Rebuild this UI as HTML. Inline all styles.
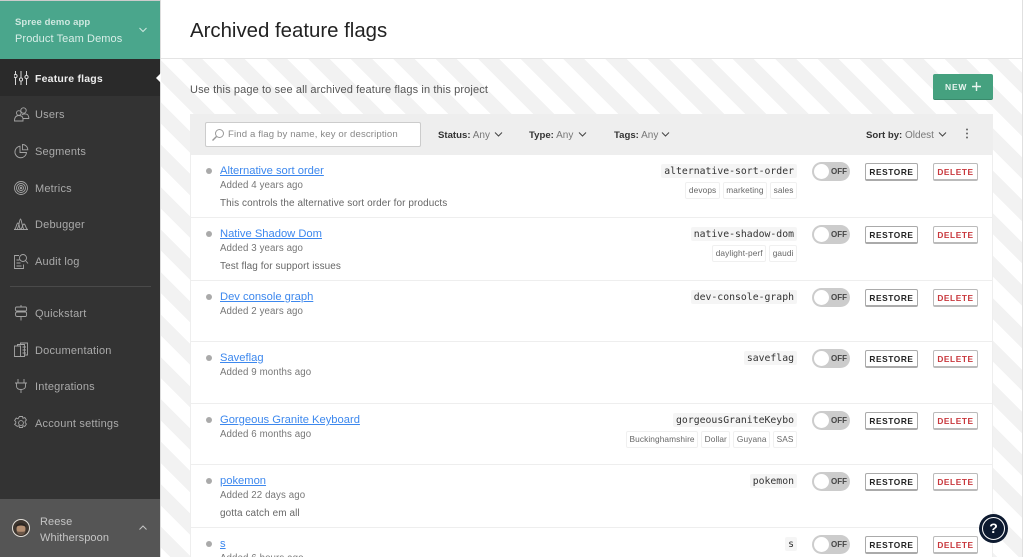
<!DOCTYPE html>
<html><head><meta charset="utf-8"><style>
html,body{margin:0;padding:0;width:1024px;height:557px;overflow:hidden;background:#fff}
body{font-family:"Liberation Sans",sans-serif;position:relative;color:#333}
.a{position:absolute;white-space:nowrap}
#side{left:0;top:0;width:160px;height:557px;background:#333}
#top{left:0;top:0;width:160px;height:59px;background:#4aa68c;border-top:1px solid #ccc;box-sizing:border-box}
#sel{left:0;top:59px;width:160px;height:37px;background:#2a2a2a}
#user{left:0;top:499px;width:160px;height:58px;background:#555}
.nav{left:35px;font-size:11px;color:#aaa;letter-spacing:.2px}
.ic{position:absolute;left:14px;width:16px;height:16px;fill:none;stroke:#a5a5a5;stroke-width:.9}
#main{left:161px;top:59px;width:861px;height:498px;background:repeating-linear-gradient(45deg,#fff 0,#fff 6.4px,#f2f2f2 6.4px,#f2f2f2 21.4px,#fff 21.4px,#fff 30px)}
#panel{left:190px;top:114px;width:803px;height:443px;background:#fff;box-sizing:border-box;border-left:1px solid #eee;border-right:1px solid #eee}
#fh{left:190px;top:114px;width:803px;height:41px;background:#eee}
.ln{left:190px;width:803px;height:1px;background:#eee}
.dot{left:206px;width:6px;height:6px;border-radius:50%;background:#aaa}
.nm{left:220px;font-size:11.2px;color:#3d88ee;text-decoration:underline}
.ad{left:220px;font-size:9.7px;color:#777;letter-spacing:.1px}
.ds{left:220px;font-size:9.95px;color:#666;letter-spacing:.1px}
.key{right:227px;font:9.8px "DejaVu Sans Mono",monospace;color:#333;background:#f5f5f5;padding:2px 3px 0;line-height:12px;border-radius:2px}
.tags{right:227px;display:flex;gap:3px}
.tags span{font-size:8.3px;color:#666;border:1px solid #f0f0f0;border-radius:2px;padding:0 2.5px;height:15px;line-height:15px;letter-spacing:.1px}
.tog{left:812px;width:38px;height:19px;border-radius:10px;background:#ccc}
.tog i{position:absolute;left:2px;top:2px;width:15px;height:15px;border-radius:50%;background:#fff}
.tog b{position:absolute;left:19px;top:5px;font-size:8px;line-height:10px;color:#444}
.btn{box-sizing:border-box;height:18px;text-align:center;background:#fff;border:1px solid #aaa;border-bottom-width:2px;border-radius:2px;font-weight:bold;font-size:8.3px;line-height:17px;letter-spacing:.6px}
.rs{left:865px;width:53px;color:#222}
.dl{left:933px;width:45px;color:#c8373c;border-color:#bbb}
.fl{top:130px;font-size:10px;color:#333}
.fl b{font-weight:bold;font-size:9.6px}.fl span{color:#777}
svg.ch{position:absolute;fill:none;stroke:#444;stroke-width:1}
</style></head><body>
<div class="a" id="side"></div><div class="a" id="top"></div><div class="a" id="sel"></div><div class="a" id="user"></div>
<div class="a" style="left:160px;top:0;width:1px;height:557px;background:#ddd"></div>
<div class="a" style="left:15px;top:17px;font-size:9.5px;font-weight:bold;color:#cfe8e0;letter-spacing:.1px">Spree demo app</div>
<div class="a" style="left:15px;top:33px;font-size:11px;color:#d8eee8;letter-spacing:.1px">Product Team Demos</div>
<svg class="a ch" style="left:138px;top:26px;stroke:#cfe8e0" width="10" height="8"><path d="M1.5 2l3.5 3.500L8.500 2"/></svg>
<div class="a" style="left:156px;top:73px;border:5px solid transparent;border-right-color:#fff;border-left:0"></div>

<svg class="ic" style="top:70px;stroke:#e8e8e8" viewBox="0 0 16 16"><path d="M1.500 1v14M7 1v14M12.500 1v14"/><circle cx="1.500" cy="6" r="1.600" fill="#2a2a2a"/><circle cx="7" cy="9.500" r="1.600" fill="#2a2a2a"/><circle cx="12.500" cy="7" r="1.600" fill="#2a2a2a"/></svg>
<div class="a nav" style="top:73px;color:#eee;font-weight:bold;font-size:10.5px">Feature flags</div>

<svg class="ic" style="top:107px" viewBox="0 0 16 16"><circle cx="9.500" cy="3.500" r="2.700"/><circle cx="4.800" cy="6" r="2.300"/><path d="M.5 14c0-4 1.500-5.500 4.300-5.500s4.200 1.500 4.200 3.500v2zM8 8c1-1.500 5-1.500 6 .2s.8 3.300.8 3.300H9"/></svg>
<div class="a nav" style="top:109px">Users</div>

<svg class="ic" style="top:143px" viewBox="0 0 16 16"><path d="M6 3.200A5.800 5.800 0 1 0 12.500 9.500H6zM8.500 1.500a5.300 5.300 0 0 1 5.300 5.300H8.500z"/></svg>
<div class="a nav" style="top:146px">Segments</div>

<svg class="ic" style="top:180px" viewBox="0 0 16 16"><circle cx="7" cy="8" r="6.500"/><circle cx="7" cy="8" r="4.500"/><circle cx="7" cy="8" r="2.500"/><circle cx="7" cy="8" r=".8"/></svg>
<div class="a nav" style="top:183px">Metrics</div>

<svg class="ic" style="top:216px" viewBox="0 0 16 16"><path d="M0 13.500h14M.5 13.500C2.500 12 2.500 7 4 7s1 5 2.500 6.500M3 13.500C5 11 5.500 3 6.500 3S8 11 10 13.500M6.500 13.500C8.500 12 8.500 8 10 8s1.500 4 3.500 5.500"/></svg>
<div class="a nav" style="top:219px">Debugger</div>

<svg class="ic" style="top:253px" viewBox="0 0 16 16"><path d="M5 2.500H.5v13h9v-4M2.500 7h3M2.500 10h4M2.500 13h5"/><circle cx="9" cy="5" r="3.500"/><path d="M11.500 7.500l2.500 3"/></svg>
<div class="a nav" style="top:256px">Audit log</div>

<div class="a" style="left:10px;top:286px;width:141px;height:1px;background:#4a4a4a"></div>

<svg class="ic" style="top:305px" viewBox="0 0 16 16"><path d="M7 0v2M7 11.500v4M2.500 2h9c1.500 0 1.500 4 0 4h-9c-1.500 0-1.500-4 0-4zM3 7h8.500c1.500 0 1.500 4.500 0 4.500H3c-2 0-2-4.500 0-4.500z"/></svg>
<div class="a nav" style="top:308px">Quickstart</div>

<svg class="ic" style="top:342px" viewBox="0 0 16 16"><path d="M.5 4v10.500h6V4zM3.500 4V2.500h7v12h-4M6.500 2.500V1h7v12h-3M8.500 5H12M8.500 8H12M8.500 11H12"/></svg>
<div class="a nav" style="top:345px">Documentation</div>

<svg class="ic" style="top:378px" viewBox="0 0 16 16"><path d="M4 1v4M10 1v4M1 5h12M2.500 5v3c0 2.500 2 3.500 4.500 3.500s4.500-1 4.500-3.500V5M7 11.500V15"/></svg>
<div class="a nav" style="top:381px">Integrations</div>

<svg class="ic" style="top:415px" viewBox="0 0 16 16"><circle cx="7" cy="8" r="2.400"/><path d="M5.500 1.500h3l.5 1.800 1.800-.7 1.600 2.400-1.200 1.300v1.400l1.200 1.300-1.600 2.400-1.800-.7-.5 1.800h-3l-.5-1.800-1.800.7L.6 9.400l1.200-1.300V6.800L.6 5.500l1.600-2.400 1.800.7z"/></svg>
<div class="a nav" style="top:418px">Account settings</div>

<svg class="a" style="left:12px;top:519px" width="18" height="18" viewBox="0 0 18 18"><circle cx="9" cy="9" r="9" fill="#e4e0da"/><circle cx="9" cy="9" r="8" fill="#3d352e"/><ellipse cx="9" cy="10" rx="4.500" ry="5.500" fill="#b48f72"/><path d="M4.500 12c1.500 1 7.500 1 9 0-.5 3-2.500 4-4.500 4s-4-1-4.500-4z" fill="#6a5546"/><path d="M3.800 8C4 3 14 3 14.200 8 11 6 7 6 3.800 8z" fill="#2c2622"/></svg>
<div class="a" style="left:40px;top:516px;font-size:11px;color:#c5c5c5;letter-spacing:.1px">Reese</div>
<div class="a" style="left:40px;top:532px;font-size:11px;color:#c5c5c5;letter-spacing:.1px">Whitherspoon</div>
<svg class="a ch" style="left:138px;top:524px;stroke:#c5c5c5" width="10" height="8"><path d="M1.500 5.500L5 2l3.500 3.500"/></svg>

<div class="a" style="left:161px;top:58px;width:861px;height:1px;background:#e4e4e4"></div>
<div class="a" style="left:1022px;top:0;width:1px;height:557px;background:#e0e0e0"></div>
<div class="a" id="main"></div>
<div class="a" style="left:190px;top:20px;font-size:20.4px;color:#222">Archived feature flags</div>
<div class="a" style="left:190px;top:84px;font-size:11px;color:#555;letter-spacing:.12px">Use this page to see all archived feature flags in this project</div>
<div class="a" style="left:933px;top:74px;width:60px;height:25px;background:#45a17f;border-radius:2px;border-bottom:1px solid #3a8a6c"></div>
<div class="a" style="left:945px;top:82px;font-size:8.5px;font-weight:bold;color:#e8f5f0;letter-spacing:.8px;line-height:10px">NEW</div>
<svg class="a" style="left:971px;top:81px" width="11" height="11"><path d="M5.500 1v9M1 5.500h9" stroke="#e8f5f0" stroke-width="1.400"/></svg>
<div class="a" id="panel"></div><div class="a" id="fh"></div>
<div class="a" style="left:205px;top:122px;width:216px;height:25px;box-sizing:border-box;background:#fff;border:1px solid #ccc;border-radius:2px"></div>
<svg class="a" style="left:211px;top:128px;fill:none;stroke:#999" width="14" height="14"><circle cx="8.500" cy="5.500" r="4"/><path d="M5.500 8.500L1.500 12.500" stroke-width="1.400"/></svg>
<div class="a" style="left:228px;top:129px;font-size:9.6px;color:#888;letter-spacing:.13px">Find a flag by name, key or description</div>
<div class="a fl" style="left:438px"><b>Status:</b> <span>Any</span></div>
<svg class="a ch" style="left:494px;top:131px" width="9" height="7"><path d="M1 1.500l3.500 3.500L8 1.500"/></svg>
<div class="a fl" style="left:529px"><b>Type:</b> <span>Any</span></div>
<svg class="a ch" style="left:578px;top:131px" width="9" height="7"><path d="M1 1.500l3.500 3.500L8 1.500"/></svg>
<div class="a fl" style="left:614px"><b>Tags:</b> <span>Any</span></div>
<svg class="a ch" style="left:661px;top:131px" width="9" height="7"><path d="M1 1.500l3.500 3.500L8 1.500"/></svg>
<div class="a fl" style="left:866px"><b>Sort by:</b> <span>Oldest</span></div>
<svg class="a ch" style="left:938px;top:131px" width="9" height="7"><path d="M1 1.500l3.500 3.500L8 1.500"/></svg>
<svg class="a" style="left:965px;top:128px;fill:#666" width="4" height="12"><circle cx="2" cy="1.500" r="1"/><circle cx="2" cy="5.500" r="1"/><circle cx="2" cy="9.500" r="1"/></svg>

<div class="a ln" style="top:217px"></div><div class="a ln" style="top:280px"></div><div class="a ln" style="top:341px"></div><div class="a ln" style="top:403px"></div><div class="a ln" style="top:464px"></div><div class="a ln" style="top:527px"></div>

<div class="a dot" style="top:168px"></div><div class="a nm" style="top:165px">Alternative sort order</div><div class="a ad" style="top:180px">Added 4 years ago</div><div class="a ds" style="top:198px">This controls the alternative sort order for products</div>
<div class="a key" style="top:164px">alternative-sort-order</div>
<div class="a tags" style="top:182px"><span>devops</span><span>marketing</span><span>sales</span></div>
<div class="a tog" style="top:162px"><i></i><b>OFF</b></div><div class="a btn rs" style="top:163px">RESTORE</div><div class="a btn dl" style="top:163px">DELETE</div>

<div class="a dot" style="top:231px"></div><div class="a nm" style="top:228px">Native Shadow Dom</div><div class="a ad" style="top:243px">Added 3 years ago</div><div class="a ds" style="top:261px">Test flag for support issues</div>
<div class="a key" style="top:227px">native-shadow-dom</div>
<div class="a tags" style="top:245px"><span>daylight-perf</span><span>gaudi</span></div>
<div class="a tog" style="top:225px"><i></i><b>OFF</b></div><div class="a btn rs" style="top:226px">RESTORE</div><div class="a btn dl" style="top:226px">DELETE</div>

<div class="a dot" style="top:294px"></div><div class="a nm" style="top:291px">Dev console graph</div><div class="a ad" style="top:306px">Added 2 years ago</div>
<div class="a key" style="top:290px">dev-console-graph</div>
<div class="a tog" style="top:288px"><i></i><b>OFF</b></div><div class="a btn rs" style="top:289px">RESTORE</div><div class="a btn dl" style="top:289px">DELETE</div>

<div class="a dot" style="top:355px"></div><div class="a nm" style="top:352px">Saveflag</div><div class="a ad" style="top:367px">Added 9 months ago</div>
<div class="a key" style="top:351px">saveflag</div>
<div class="a tog" style="top:349px"><i></i><b>OFF</b></div><div class="a btn rs" style="top:350px">RESTORE</div><div class="a btn dl" style="top:350px">DELETE</div>

<div class="a dot" style="top:417px"></div><div class="a nm" style="top:414px">Gorgeous Granite Keyboard</div><div class="a ad" style="top:429px">Added 6 months ago</div>
<div class="a key" style="top:413px">gorgeousGraniteKeybo</div>
<div class="a tags" style="top:431px"><span>Buckinghamshire</span><span>Dollar</span><span>Guyana</span><span>SAS</span></div>
<div class="a tog" style="top:411px"><i></i><b>OFF</b></div><div class="a btn rs" style="top:412px">RESTORE</div><div class="a btn dl" style="top:412px">DELETE</div>

<div class="a dot" style="top:478px"></div><div class="a nm" style="top:475px">pokemon</div><div class="a ad" style="top:490px">Added 22 days ago</div><div class="a ds" style="top:508px">gotta catch em all</div>
<div class="a key" style="top:474px">pokemon</div>
<div class="a tog" style="top:472px"><i></i><b>OFF</b></div><div class="a btn rs" style="top:473px">RESTORE</div><div class="a btn dl" style="top:473px">DELETE</div>

<div class="a dot" style="top:541px"></div><div class="a nm" style="top:538px">s</div><div class="a ad" style="top:553px">Added 6 hours ago</div>
<div class="a key" style="top:537px">s</div>
<div class="a tog" style="top:535px"><i></i><b>OFF</b></div><div class="a btn rs" style="top:536px">RESTORE</div><div class="a btn dl" style="top:536px">DELETE</div>

<div class="a" style="left:979px;top:514px;width:29px;height:29px;border-radius:50%;background:#0d1a30"></div>
<div class="a" style="left:982px;top:517px;width:23px;height:23px;box-sizing:border-box;border-radius:50%;border:1px solid #fff;color:#fff;font-size:14px;font-weight:bold;line-height:21px;text-align:center">?</div>
</body></html>
